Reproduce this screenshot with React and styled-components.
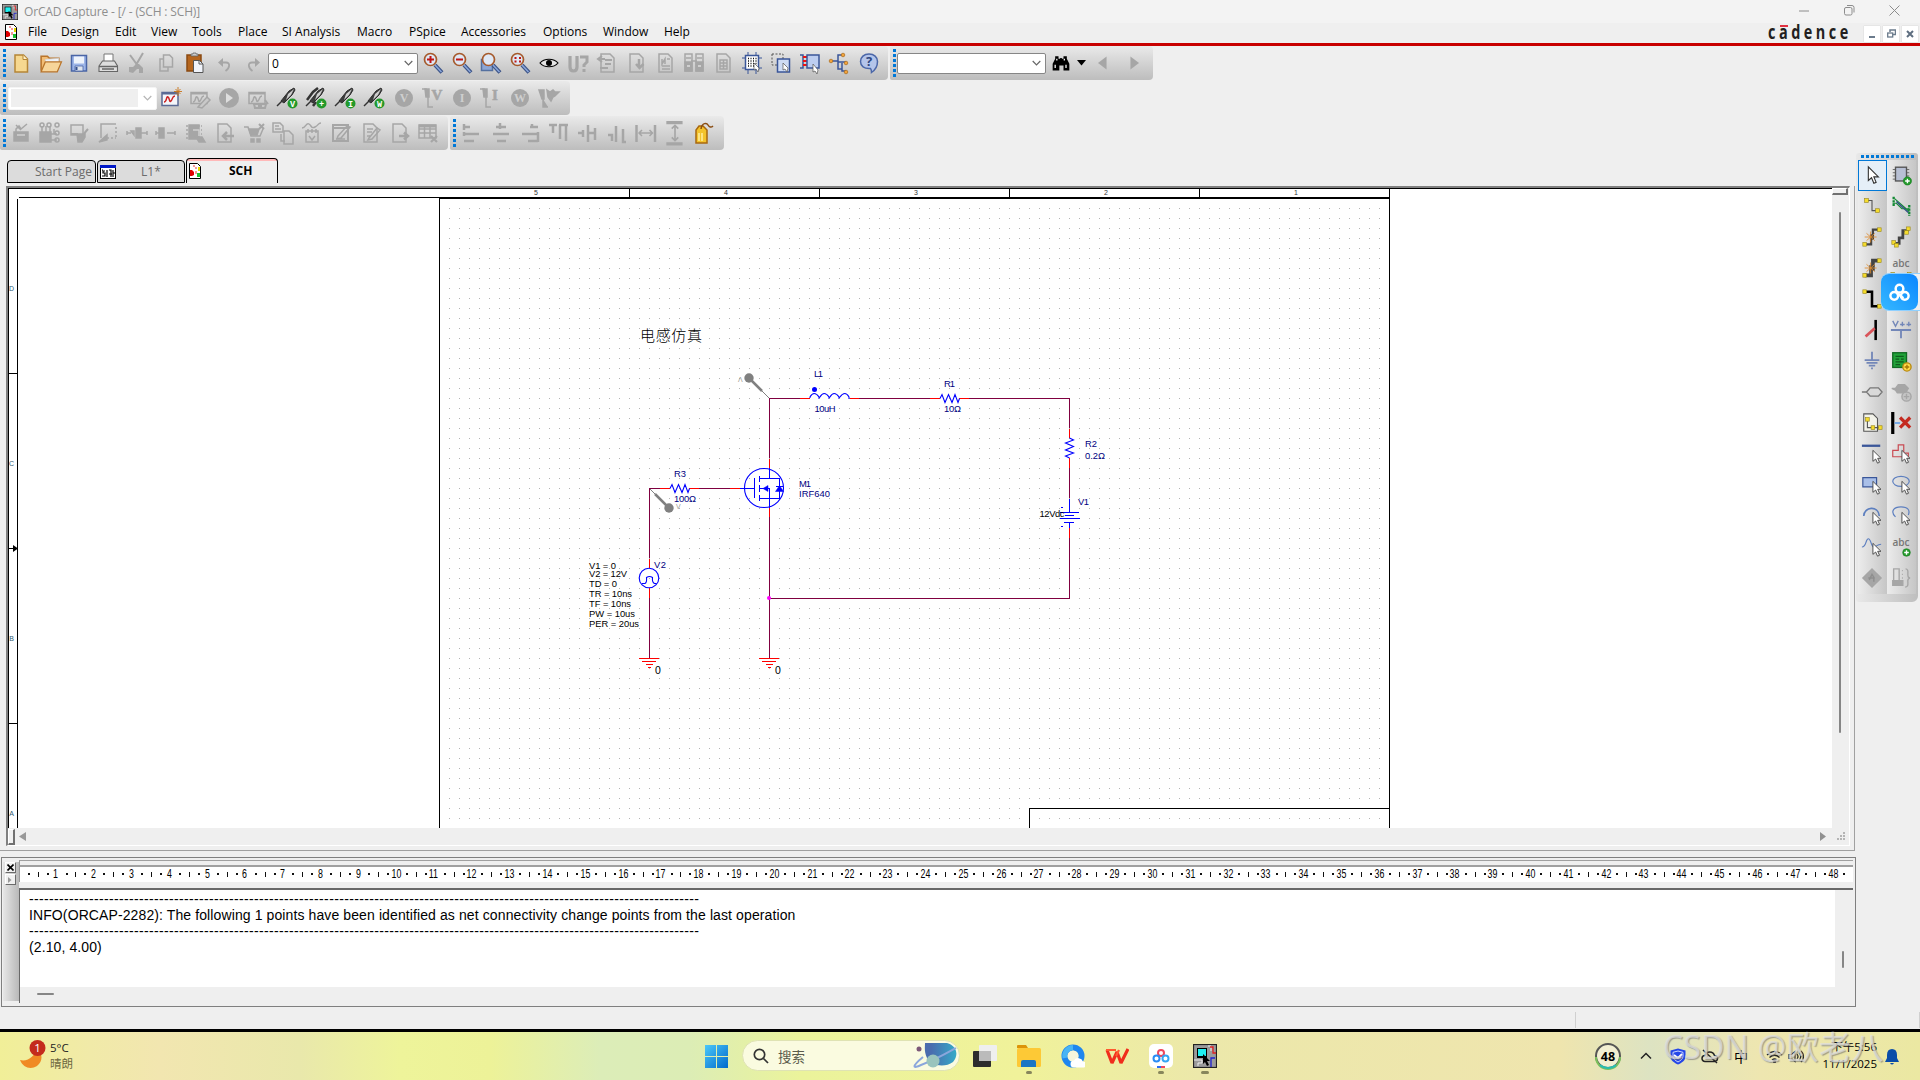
import React from "react";
import styled, { createGlobalStyle } from "styled-components";

const GlobalStyle = createGlobalStyle`
  * {
    box-sizing: border-box;
  }
  body {
    margin: 0;
    overflow: hidden;
    background: #efefef;
    font-family: "Open Sans", "Noto Sans CJK SC", sans-serif;
    font-size: 12px;
    color: #000;
  }
`;

/* ---------- window chrome ---------- */

const Screen = styled.div`
  position: relative;
  width: 1920px;
  height: 1080px;
  display: flex;
  flex-direction: column;
  overflow: hidden;
  background: #efefef;
`;

const TitleBar = styled.header`
  height: 23px;
  flex: none;
  display: flex;
  align-items: center;
  padding-left: 2px;
  background: #f3f3f3;
  color: #8e8e8e;
`;

const TitleText = styled.span`
  flex: 1;
  margin-left: 6px;
  letter-spacing: ${(props) => props.$spacing || "0"};
  white-space: nowrap;
`;

const WindowButtons = styled.div`
  display: flex;
  width: 139px;
  height: 20px;
  margin-bottom: 2px;
`;

const WindowButton = styled.div`
  width: 45.6px;
  display: flex;
  align-items: center;
  justify-content: center;
`;

const MenuBar = styled.nav`
  height: 20px;
  flex: none;
  display: flex;
  align-items: center;
  padding-left: 5px;
`;

const MenuIcon = styled.div`
  width: 23px;
  height: 18px;
`;

const MenuItem = styled.span`
  width: ${(props) => props.$width}px;
  line-height: 18px;
  padding-bottom: 2px;
  white-space: nowrap;
`;

const Brand = styled.div`
  position: relative;
  margin-left: auto;
  width: 87px;
  height: 19px;
  font-family: "Open Sans", sans-serif;
  font-weight: 700;
  font-size: 19px;
  line-height: 17px;
  letter-spacing: 4.6px;
  color: #231f20;
  white-space: nowrap;

  span {
    display: inline-block;
    transform: scaleX(0.76);
    transform-origin: left;
  }

  &:after {
    content: "";
    position: absolute;
    left: 12px;
    top: 1px;
    width: 8px;
    height: 2px;
    background: #e03040;
  }
`;

const MdiButtons = styled.div`
  display: flex;
  gap: 3px;
  margin: 1px 2px 0 9px;
`;

const MdiButton = styled.div`
  width: 16px;
  height: 16px;
  background: #fff;
  box-shadow: 0 0 1px #bbb;
  display: flex;
  align-items: center;
  justify-content: center;
`;

const RedLine = styled.div`
  height: 3px;
  flex: none;
  background: #c80000;
`;

/* ---------- toolbars ---------- */

const ToolbarArea = styled.div`
  height: 105px;
  flex: none;
  display: flex;
  flex-direction: column;
  gap: 1px;
`;

const ToolbarRow = styled.div`
  display: flex;
  gap: 2px;
`;

const Toolbar = styled.div`
  width: ${(props) => props.$width}px;
  height: 34px;
  display: flex;
  align-items: center;
  padding-left: 3px;
  background: linear-gradient(#eaeaea, #dcdcdc 30%, #bdbdbd);
  border-radius: 2px 4px 4px 2px;
`;

const Grip = styled.div`
  width: 3px;
  height: 28px;
  margin-right: ${(props) => props.$space}px;
  background: repeating-linear-gradient(#0078d7 0 3px, transparent 3px 5px);
`;

const Slot = styled.div`
  width: ${(props) => props.$width || 29.07}px;
  flex: none;
  height: 26px;
  display: flex;
  align-items: center;
  justify-content: center;

  svg {
    display: block;
  }
`;

const Combo = styled.div`
  width: ${(props) => props.$width}px;
  height: ${(props) => props.$height || 21}px;
  flex: none;
  display: flex;
  align-items: center;
  justify-content: space-between;
  padding: 0 4px 0 3px;
  background: #fff;
  border: 1px solid ${(props) => (props.$flat ? "#f4f4f4" : "#868686")};
  border-radius: 2px;
  font-size: 12px;
`;

const ComboFill = styled.div`
  width: 127px;
  height: 18px;
  margin-left: -1px;
  background: #efefef;
`;

/* ---------- document area ---------- */

const Middle = styled.div`
  height: 856px;
  flex: none;
  display: flex;
`;

const Documents = styled.main`
  width: 1856px;
  display: flex;
  flex-direction: column;
`;

const Tabs = styled.div`
  height: 35px;
  padding: 7px 0 0 7px;
  display: flex;
  align-items: flex-start;
  gap: 1px;
`;

const Tab = styled.div`
  width: ${(props) => props.$width}px;
  height: ${(props) => (props.$active ? 25 : 23)}px;
  margin-top: ${(props) => (props.$active ? 0 : 2)}px;
  display: flex;
  align-items: center;
  padding-left: 2px;
  border: 1px solid #000;
  border-bottom-width: ${(props) => (props.$active ? 0 : 1)}px;
  border-radius: 4px 4px 0 0;
  background: ${(props) => (props.$active ? "linear-gradient(#ffb9b9 2px, #efefef 2px)" : "#dcdcdc")};
  color: ${(props) => (props.$active ? "#000" : "#6b6b6b")};
  font-weight: ${(props) => (props.$active ? 700 : 400)};

  span {
    flex: 1;
    padding-left: ${(props) => props.$indent}px;
    line-height: 16px;
    white-space: nowrap;
  }
`;

const DocFrame = styled.section`
  width: 1855px;
  height: 665px;
  flex: none;
  border-right: 1px solid #a0a0a0;
  border-bottom: 1px solid #a0a0a0;
`;

const SchematicView = styled.div`
  width: 1844px;
  height: 660px;
  margin-left: 6px;
  display: grid;
  grid-template-columns: 1824px 17px;
  grid-template-rows: 640px 17px;
  border-left: 2px solid #808080;
  border-top: 2px solid #808080;
  border-right: 1px solid #fff;
  border-bottom: 1px solid #fff;
`;

const Sheet = styled.svg`
  display: block;
  width: 1824px;
  height: 640px;
  background: #fff;
  font-family: "Liberation Sans", "Noto Sans CJK SC", sans-serif;
`;

const VScroll = styled.div`
  display: flex;
  flex-direction: column;
  align-items: center;
  padding-right: 2px;
`;

const SplitBox = styled.div`
  width: ${(props) => props.$w}px;
  height: ${(props) => props.$h}px;
  flex: none;
  background: #f0f0f0;
  border: 1px solid #fff;
  border-right: 2px solid #707070;
  border-bottom: 2px solid #707070;
`;

const ScrollThumb = styled.div`
  width: ${(props) => props.$w}px;
  height: ${(props) => props.$h}px;
  margin: ${(props) => props.$margin || "0"};
  border-radius: 1px;
  background: #868686;
`;

const HScroll = styled.div`
  display: flex;
  align-items: center;
  padding-right: 6px;

  svg:last-child {
    margin-left: auto;
  }
`;

/* ---------- session log ---------- */

const LogPanel = styled.section`
  width: 1855px;
  height: 150px;
  margin: 6px 0 0 1px;
  display: flex;
  border: 1px solid #7f7f7f;
`;

const LogHandle = styled.div`
  width: 16px;
  height: 139px;
  margin: 4px 0 0 1px;
  flex: none;
  display: flex;
  flex-direction: column;
  align-items: center;
  gap: 1px;
  padding-right: 2px;
  background: linear-gradient(90deg, #e6e6e6, #b9b9b9);
`;

const HandleButton = styled.div`
  width: 11px;
  height: 11px;
  display: flex;
  align-items: center;
  justify-content: center;
  background: #f0f0f0;
  border: 1px solid #fff;
  border-right-color: #6a6a6a;
  border-bottom-color: #6a6a6a;
`;

const LogBody = styled.div`
  flex: 1;
  min-width: 0;
  margin-right: 2px;
  padding-top: 2px;
  display: flex;
  flex-direction: column;
`;

const Ruler = styled.div`
  height: 22px;
  flex: none;
  display: flex;
  overflow: hidden;
  padding-left: 4px;
  border-top: 1px solid #a0a0a0;
  border-left: 1px solid #9a9a9a;
  background: linear-gradient(#efefef 4px, #a0a0a0 4px 6px, #fff 6px);
`;

const RulerCell = styled.div`
  width: 37.82px;
  flex: none;
  display: flex;
  align-items: center;
  padding-top: 5px;
`;

const Mark = styled.i`
  flex: 1;
  display: flex;
  justify-content: center;

  &:before {
    content: "";
    width: ${(props) => (props.$tall ? 1 : 2)}px;
    height: ${(props) => (props.$tall ? 5 : 2)}px;
    background: #111;
  }
`;

const RulerNumber = styled.span`
  flex: 1;
  width: 0;
  display: flex;
  justify-content: center;
  font-family: "Liberation Sans", sans-serif;
  font-size: 13px;
  line-height: 14px;
  transform: translateX(-1.3px) scaleX(0.68);
`;

const LogText = styled.div`
  width: 1834px;
  height: 115px;
  margin-top: 6px;
  display: grid;
  grid-template-columns: 1815px 17px;
  grid-template-rows: 97px 16px;
  border-top: 2px solid #696969;
  border-left: 1px solid #696969;
`;

const LogLines = styled.div`
  padding: 1px 0 0 9px;
  background: #fff;
  font-family: "Liberation Sans", sans-serif;
  font-size: 14px;
  line-height: 16px;
`;

const LogLine = styled.div`
  height: 16px;
  white-space: nowrap;
  letter-spacing: ${(props) => (props.$rule ? 0.34 : 0.106)}px;
`;

/* ---------- side palette ---------- */

const Palette = styled.aside`
  width: 62px;
  height: 449px;
  margin-top: 2px;
  padding: 2px;
  display: flex;
  flex-direction: column;
  border-radius: 3px 3px 6px 3px;
  background: linear-gradient(90deg, #e9e9e9, #bebebe);
`;

const PaletteGrip = styled.div`
  width: 54px;
  height: 3px;
  margin: 0 0 2px 3px;
  background: repeating-linear-gradient(90deg, #0078d7 0 3px, transparent 3px 5px);
`;

const PaletteGrid = styled.div`
  display: grid;
  grid-template-columns: 29px 29px;
  grid-auto-rows: 31px;
`;

const PaletteCell = styled.div`
  display: flex;
  align-items: center;
  justify-content: center;
  padding: 0 1px 2px 0;
  background: linear-gradient(90deg, #ececec, #c6c6c6);
  ${(props) => props.$selected && "background: #e5eff8; outline: 1px solid #0078d7; outline-offset: -1px;"}

  svg {
    width: 22px;
    height: 22px;
  }
`;

const FloatingBadge = styled.div`
  position: absolute;
  left: 1881px;
  top: 273px;
  width: 39px;
  height: 38px;
  display: flex;
  border-top: 1px solid #8fd0ff;
  border-bottom: 1px solid #8fd0ff;
  border-radius: 8px 0 0 8px;
  background: #f0f0f0;

  div {
    width: 37px;
    display: flex;
    align-items: center;
    justify-content: center;
    border-radius: 8px;
    background: linear-gradient(45deg, #36b8ff, #0a86ff);
  }
`;

/* ---------- status bar + taskbar ---------- */

const StatusBar = styled.footer`
  height: 22px;
  flex: none;
  display: flex;
  justify-content: flex-end;
  padding: 5px 0 1px;

  div {
    width: 345px;
    border-left: 1px solid #d0d0d0;
    border-right: 1px solid #d0d0d0;
  }
`;

const Taskbar = styled.div`
  height: 51px;
  flex: none;
  display: flex;
  align-items: center;
  border-top: 3px solid #000;
  background: linear-gradient(
    90deg,
    #f1ef98 0,
    #f1eaa8 90px,
    #f2e6b0 160px,
    #e9e8ab 300px,
    #eef49a 400px,
    #edf298 490px,
    #dcedb8 600px,
    #dcedb5 690px,
    #ebf39b 800px,
    #f0f29a 1020px,
    #ece8aa 1200px,
    #efe5ae 1560px,
    #dde3c2 1650px,
    #eee6b0 1760px,
    #ebe8a2 1920px
  );
`;

const Weather = styled.div`
  width: 705px;
  display: flex;
  align-items: center;
  padding: 0 0 3px 18px;
`;

const WeatherText = styled.div`
  margin-left: 4px;
  padding-top: 2px;
  font-size: 11.5px;
  line-height: 16px;
  color: #222;

  span {
    display: block;
    color: #6b673f;
  }
`;

const SearchPill = styled.div`
  width: 218px;
  height: 31px;
  margin: 0 13px 1px 14px;
  display: flex;
  align-items: center;
  padding: 0 2px 0 10px;
  border-radius: 16px;
  border: 1px solid #dfe3b4;
  background: #fafbe0;
  font-size: 13.5px;
  color: #5b5b4c;

  span {
    flex: 1;
    margin-left: 9px;
  }
`;

const TaskIcon = styled.div`
  position: relative;
  width: 24px;
  height: 24px;
  margin-right: 20px;

  svg {
    display: block;
  }

  &:after {
    content: "";
    position: absolute;
    left: ${(props) => (props.$wide ? 8 : 9)}px;
    top: 27px;
    width: ${(props) => (props.$wide ? 8 : 6)}px;
    height: 3px;
    border-radius: 2px;
    background: ${(props) => (props.$running ? "#87865c" : "transparent")};
  }
`;

const Tray = styled.div`
  margin-left: auto;
  display: flex;
  align-items: center;
  padding-right: 20px;
`;

const TrayItem = styled.div`
  width: ${(props) => props.$width}px;
  display: flex;
  justify-content: center;
  font-size: 14px;
`;

const Clock = styled.div`
  width: 58px;
  margin: 0 7px 2px 15px;
  text-align: right;
  font-size: 11.5px;
  line-height: 17px;
  white-space: nowrap;
`;

const Watermark = styled.div`
  position: absolute;
  left: 1663px;
  top: 1025px;
  font-family: "Open Sans", "Noto Sans CJK SC", sans-serif;
  font-size: 32px;
  line-height: 44px;
  letter-spacing: 0.3px;
  white-space: nowrap;
  color: rgba(225, 225, 225, 0.72);
  text-shadow: 1px 1px 1px rgba(110, 110, 110, 0.6);
`;

/* ---------- icons ---------- */

const G = "#a6a6a6";

const Icon = ({ children, size = 24, stroke = G, w = 1.5 }) => (
  <svg width={size} height={size} viewBox="0 0 24 24" fill="none" stroke={stroke} strokeWidth={w}>
    {children}
  </svg>
);

const Arrow = ({ x = 10, y = 8 }) => (
  <path
    d={`M${x} ${y}v12l3-2.5 2 4.5 2.2-1-2-4.3h3.6z`}
    fill="#fff"
    stroke="#444"
    strokeWidth="1"
  />
);

const PlusDot = ({ x = 18, y = 18, r = 4.5 }) => (
  <g>
    <circle cx={x} cy={y} r={r} fill="#23992b" stroke="#157a1d" strokeWidth=".6" />
    <path d={`M${x - 2.5} ${y}h5M${x} ${y - 2.5}v5`} stroke="#fff" strokeWidth="1.5" />
  </g>
);

const Node = ({ x, y }) => <rect x={x - 2} y={y - 2} width="4" height="4" fill="#f5dc2c" stroke="#9b8a20" strokeWidth=".7" />;

const Chevron = ({ color = "#666" }) => (
  <svg width="9" height="6" viewBox="0 0 9 6" fill="none" stroke={color} strokeWidth="1.2">
    <path d="M.7 1l3.8 3.8L8.3 1" />
  </svg>
);

const Magnifier = ({ children, back }) => (
  <Icon>
    {back && <rect x="2.5" y="8.5" width="11" height="11" fill="#8ba6d6" stroke="#54709f" />}
    <path d="M14 14l7 7.5" stroke="#3c5488" strokeWidth="4" />
    <path d="M14 14l6.5 7" stroke="#8ba7da" strokeWidth="1.5" />
    <circle cx="9.5" cy="8.5" r="6" fill="#dfe8f5" stroke="#a65a2c" strokeWidth="1.7" />
    <g stroke="#c01515" strokeWidth="2">{children}</g>
  </Icon>
);

const Probe = ({ label, twin }) => (
  <Icon>
    <path d="M2 20l5-5" stroke="#333" strokeWidth="1.5" />
    <path d="M6 15l8-10 5-3 1 2-3 5-8 8z" fill="#3c3c3c" stroke="#2f2f2f" strokeWidth="1" />
    <path d="M13 8l6-5-3 6-5 5z" fill="#cfcfcf" stroke="none" />
    {twin && <path d="M3 14l6-8 5-4M9 20l3-4" stroke="#333" strokeWidth="2.5" />}
    <circle cx="17.5" cy="17.5" r="5" fill="#23992b" stroke="none" />
    <text x="17.5" y="20.5" fontSize="8.5" fontWeight="700" fill="#fff" stroke="none" textAnchor="middle" fontFamily="Liberation Mono, monospace">
      {label}
    </text>
  </Icon>
);

const GrayDisc = ({ label }) => (
  <Icon>
    <circle cx="12" cy="12" r="9" fill={G} stroke="none" />
    <text x="12" y="16.4" fontSize="12" fill="#cfcfcf" stroke="none" textAnchor="middle" fontFamily="Liberation Serif, serif" fontWeight="700">
      {label}
    </text>
  </Icon>
);

const GrayProbe = ({ label }) => (
  <Icon>
    <path d="M1 3h4v1M5.500 3v8M7 11v10h5" />
    <path d="M4 3h4v8h-3z" fill={G} />
    <text x="16" y="14" fontSize="15" fill={G} stroke={G} strokeWidth=".6" textAnchor="middle" fontFamily="Liberation Serif, serif" fontWeight="700">
      {label}
    </text>
  </Icon>
);

const NewIcon = () => (
  <Icon>
    <path d="M6 4h8.500l4 4v13h-12.500z" fill="#f6d890" stroke="#b58536" />
    <path d="M14 4v4.500h4.500" fill="#fff1c8" stroke="#b58536" strokeWidth="1" />
  </Icon>
);

const OpenIcon = () => (
  <Icon size={25}>
    <path d="M3 19V5h6l2 2h9v4" fill="#f2bd75" stroke="#b9742a" />
    <path d="M7 11V8l13-1v4" fill="#eef3fa" stroke="#ccc" strokeWidth=".7" />
    <path d="M3 20l4-9.500h15.500L18.500 20z" fill="#f7d59a" stroke="#b9742a" strokeWidth="1.2" />
  </Icon>
);

const SaveIcon = () => (
  <Icon>
    <path d="M4.500 4.500h15v15.500h-15z" fill="#9db5e8" stroke="#4a65a5" />
    <path d="M7 5.500h10v7h-10z" fill="#eef3fb" stroke="none" />
    <path d="M8 15h8v5h-8z" fill="#dfe5ee" stroke="#4a65a5" strokeWidth=".8" />
    <path d="M9.500 16v3" stroke="#35508f" strokeWidth="2" />
  </Icon>
);

const PrintIcon = () => (
  <Icon>
    <path d="M8 11V3h9v8" fill="#fff" stroke="#777" strokeWidth="1" />
    <path d="M3 15l3.500-5h12l3 5v5.500H3z" fill="#dedede" stroke="#666" strokeWidth="1.100" />
    <path d="M3 15.500h18.500M6 18h12" stroke="#666" strokeWidth="1.300" />
  </Icon>
);

const CutIcon = () => (
  <Icon>
    <path d="M5 4l8 11M18 2l-7 12" strokeWidth="2" />
    <path d="M4 21v-5h4l3-3h3l4 4v5h-4v-4h-2l-4 4z" fill={G} stroke="none" />
  </Icon>
);

const CopyIcon = () => (
  <Icon>
    <path d="M9.500 4h6l3 3v9h-9z" />
    <path d="M9 8H6v12h8v-4" />
  </Icon>
);

const PasteIcon = () => (
  <Icon>
    <rect x="4" y="4" width="14" height="16" fill="#b5651d" stroke="#8a4a12" />
    <path d="M8 5V3h2V2h3v1h2v2z" fill="#ccc" stroke="#666" strokeWidth=".8" />
    <path d="M10.500 9.500h6l3.500 3.500v8.500h-9.500z" fill="#f0f3fa" stroke="#555" strokeWidth="1" />
    <path d="M16 9.500V13h4" stroke="#555" strokeWidth="1" />
  </Icon>
);

const UndoIcon = ({ flip }) => (
  <Icon>
    <g transform={flip ? "translate(24 0) scale(-1 1)" : undefined}>
      <path d="M9 11.500h5c4.500 0 4 5.500-.5 8.500" strokeWidth="1.800" />
      <path d="M6 11.500l5-4.500v9z" fill={G} stroke="none" />
    </g>
  </Icon>
);

const EyeIcon = () => (
  <Icon stroke="#000" w={1.2}>
    <path d="M3 12c4-5 14-5 18 0-4 5-14 5-18 0z" fill="#e4e4e4" />
    <circle cx="12" cy="12" r="3" fill="#000" stroke="none" />
  </Icon>
);

const AnnotateIcon = () => (
  <Icon>
    <path d="M4 5v11q0 4 3.500 4t3.500-4V5" strokeWidth="3.200" />
    <path d="M14 6h7v5l-3 3v2M18 18v3" strokeWidth="3" />
  </Icon>
);

const PageIcon = ({ kind }) => (
  <Icon>
    <path d="M6 3h9l4 4v14H6z" />
    {kind === "back" && <path d="M10 9h7M10 13h6M3 8h7M7 5L3 8l4 3M5 17h8" strokeWidth="2" />}
    {kind === "drc" && <path d="M15 8v8M12 13l3.500 4 4-4" strokeWidth="2.500" />}
    {kind === "net" && <path d="M9 8v5l3-5v5M14 8h3M9 15h8M9 18h8" />}
    {kind === "table" && <path d="M9 9h7v9H9zM9 12h7M9 15h7M12.500 9v9" />}
    {kind === "out" && <path d="M12 15h9M17 11.500l4 3.500-4 3.500" strokeWidth="2.500" />}
    {kind === "in" && <path d="M11 15h11M15 11l-4 4 4 4" strokeWidth="2.500" />}
    {kind === "edit" && <path d="M9 8h6M9 11h5M9 15h3M11 17l8-10 3 2-8 9-4 1z" />}
  </Icon>
);

const CrossRefIcon = () => (
  <Icon>
    <path d="M3 3h7v17H3zM14 3h7v17h-7zM4 7h5M15 7h5M9 10h6" />
    <path d="M3 11h7v9H3zM14 11h7v9h-7z" fill={G} />
    <path d="M5 15h3M16 15h3" stroke="#ddd" />
  </Icon>
);

const GridIcon = () => (
  <Icon stroke="#3a5699">
    <rect x="5.500" y="4.500" width="13" height="14" fill="#fff" />
    <path d="M8 1v3M16 1v3M8 19v4M16 19v4M2 7h3M2 17h3M19 7h3M19 17h3" strokeWidth="1" />
    <path d="M8 7.500h9M8 10h9M8 12.500h9M8 15h6" stroke="#111" strokeDasharray="1 1.500" />
    <path d="M14 12v7l2-1 2 3 1-4z" fill="#fff" stroke="#555" strokeWidth=".7" />
  </Icon>
);

const SelectAreaIcon = () => (
  <Icon stroke="#3a5699">
    <rect x="3" y="3" width="11" height="11" stroke="#555" strokeDasharray="2 1.500" strokeWidth="1" />
    <rect x="8.500" y="8" width="12" height="13" fill="#cfdcf4" />
    <path d="M14 12v7l2-1 2 3 1-4z" fill="#fff" stroke="#555" strokeWidth=".7" />
  </Icon>
);

const PinSelectIcon = () => (
  <Icon stroke="#3a5699">
    <path d="M2 4h3v13H2" />
    <path d="M5 6h5M5 10h5M5 14h5" stroke="#e11" strokeWidth="2" />
    <rect x="9" y="4" width="12" height="13" fill="#bccdf0" />
    <path d="M15 13v8l2-1 2 3 1-4z" fill="#fff" stroke="#555" strokeWidth=".7" />
  </Icon>
);

const TreeIcon = () => (
  <Icon stroke="#3a5699">
    <path d="M4 10h7M15 4h-4v14h4M11 11h8M15 12v8h4" />
    <g fill="#f2a33a" stroke="#a8681a" strokeWidth=".7">
      <circle cx="4" cy="10" r="1.800" />
      <circle cx="16" cy="4" r="1.800" />
      <circle cx="19" cy="12" r="1.800" />
      <circle cx="19" cy="21" r="1.800" />
    </g>
  </Icon>
);

const HelpIcon = () => (
  <Icon stroke="#4b67a8">
    <path d="M12 3c5 0 8.500 3 8.500 7.500 0 6-3 9-6 11 0-2 0-3-1-4C7 18 3.500 15 3.500 10.500S7 3 12 3z" fill="#b4c5ea" />
    <text x="12" y="15" fontSize="13" fontWeight="700" fill="#2f477f" stroke="none" textAnchor="middle">
      ?
    </text>
  </Icon>
);

const BinocularsIcon = () => (
  <Icon stroke="none" size={20}>
    <path d="M5 4h4v3h2V6h2v1h2V4h4v3l3 6v8h-7v-6h-5v6H2v-8l3-6z" fill="#000" />
    <path d="M5 14v4M18 14v4M7 7v2M16 7v2" stroke="#fff" />
  </Icon>
);

const ProfileIcon = ({ kind }) => {
  const c = kind === "new" ? "#5a6a94" : G;
  return (
    <Icon stroke={c}>
      <rect x="3" y="6.500" width="16" height={kind === "new" ? 13 : 11} fill={kind === "new" ? "#f4f6fa" : "none"} />
      <path d="M3 7.500h16" strokeWidth="2" />
      <path d="M5 16c3 0 2-6 4-5s1 6 3 4 1-5 4-5" stroke={kind === "new" ? "#c22" : G} />
      {kind === "new" && <path d="M19 1v9M15 5.500h8M16.500 3l5 5M21.500 3l-5 5" stroke="#c8741a" strokeWidth=".9" />}
      {kind === "edit" && <path d="M10 21l9-10 3 3-8 8z" fill="#c9c9c9" />}
      {kind === "view" && <path d="M8 18h5v4H9zM15 18h5l-1 4h-4zM13 19h2M19 14l3 4" strokeWidth="2" />}
    </Icon>
  );
};

const RunIcon = () => (
  <Icon stroke="none">
    <circle cx="12" cy="12" r="10" fill={G} />
    <path d="M9 7l7 5-7 5z" fill="#dedede" />
  </Icon>
);

const MarkerIcon = () => (
  <Icon>
    <path d="M2 4h5v9H5zM6 13v8h5" fill={G} />
    <path d="M10 4l3 2 3-2 2 2h4l-4 4-2 1-2 4-3-4z" fill={G} />
  </Icon>
);

const BasketIcon = () => (
  <Icon>
    <path d="M5 11h14v9H5z" fill={G} />
    <path d="M7 11V8l3-3 2 3 6-5M7 4l5 5M6 14h12" />
    <path d="M8 14h8" stroke="#d0d0d0" />
  </Icon>
);

const MatrixIcon = () => (
  <Icon>
    <path d="M2 11h11v10H2z" fill={G} />
    <path d="M4 5v6M8 5v6M12 5v6M13 13h6M13 19h6M16 8v5" />
    <circle cx="4" cy="4" r="2" />
    <circle cx="11" cy="4" r="2" />
    <circle cx="19" cy="4" r="2" />
    <circle cx="19" cy="12" r="2" />
    <circle cx="19" cy="19" r="2" />
  </Icon>
);

const CheckPartIcon = () => (
  <Icon>
    <rect x="4" y="4" width="12" height="10" />
    <path d="M10 13h8v3l-3 5h-4z" fill={G} />
    <path d="M4 13h7M15 15l6-7" strokeWidth="2" />
  </Icon>
);

const CalloutIcon = () => (
  <Icon>
    <path d="M5 17V3h15" />
    <path d="M20 6v11M11 17h9" strokeDasharray="2 2" />
    <path d="M3 21l8-7v5z" fill={G} />
  </Icon>
);

const InlineIcon = ({ long }) => (
  <Icon>
    <path d="M2 10v4M2 12h4" />
    <path d={long ? "M6 10l3 4v-4zM16 12h6M22 10v4" : "M13 12h8M21 10v4"} />
    <rect x={long ? 11 : 5} y="7" width="5" height="10" fill={G} />
  </Icon>
);

const ChipIcon = () => (
  <Icon>
    <rect x="6" y="4" width="10" height="14" fill={G} />
    <path d="M3 5h16M3 9h16M3 13h16M3 17h16" strokeDasharray="2 1" />
    <path d="M10 9h6v6" stroke="#d0d0d0" />
    <path d="M13 16h6l3 5h-6z" fill={G} />
  </Icon>
);

const CartIcon = () => (
  <Icon>
    <path d="M2 6h4l3 9h9l3-7" />
    <path d="M7 8h10l-2 6H9z" fill={G} />
    <path d="M17 3l5 5M22 3l-5 5" strokeWidth="2" />
    <path d="M9 18h3v3H9zM15 18h3v3h-3z" fill={G} />
  </Icon>
);

const PagesIcon = () => (
  <Icon>
    <path d="M2 2h7l3 3v6H2zM4 5h4M4 8h6" />
    <path d="M10 13v7h4M13 10h5l4 4v9h-9z" />
  </Icon>
);

const WaveBagIcon = () => (
  <Icon>
    <path d="M2 7c4 0 4-6 7-4s2 5 6 3 3-4 6-4" />
    <path d="M6 10h12v11H6zM8 8v4M12 8v4M16 8v4" />
    <path d="M9 15l3 4 3-4" />
  </Icon>
);

const EditBoxIcon = () => (
  <Icon>
    <path d="M4 4h15v16H4zM4 7h15" strokeWidth="2" />
    <path d="M7 18h9M9 15l9-10 3 1-9 11-4 1z" />
  </Icon>
);

const TableIcon = () => (
  <Icon>
    <path d="M3 4h17v13H3zM3 8h17M3 12h17M8.500 4v13M14 4v13" />
    <path d="M3 5h17" strokeWidth="3" />
    <path d="M15 15l6 6M21 15l-6 6" strokeWidth="2.200" />
  </Icon>
);

const ALIGN_PATHS = {
  left: "M4 3v6M4 6h6M3 13h16M4 11v4M4 20h10",
  center: "M7 6h10M11 2v6M4 13h16M8 20h9",
  right: "M14 3v4M12 6h8M4 13h16M20 11v10M10 20h10",
  top: "M2 4h8M6 4v8M12 4h9M13 4v14M19 4v16",
  middle: "M2 12h5M7 9v7M12 4v17M12 12h6M19 7v12",
  bottom: "M3 14h4v6M11 5v16M18 8v13h3",
};

const AlignIcon = ({ kind }) => (
  <Icon w={2.5}>
    <path d={ALIGN_PATHS[kind]} />
  </Icon>
);

const SpreadHIcon = () => (
  <Icon>
    <path d="M2.500 4v17M21 4v17" strokeWidth="2.500" />
    <path d="M5 12h13M8 9l-3 3 3 3M15.500 9l3 3-3 3" />
  </Icon>
);

const SpreadVIcon = () => (
  <Icon size={26}>
    <path d="M4 2.500h15M4 22h15" strokeWidth="3" />
    <path d="M12 5v14M9 8l3-3 3 3M9 16l3 3 3-3" />
  </Icon>
);

const TagIcon = () => (
  <Icon>
    <path d="M4 22V9l3-4h4l4 4v13z" fill="#f3c32c" stroke="#a8680f" />
    <path d="M7 12v8M10 12v8" stroke="#fff0a0" />
    <path d="M9 8c1-7 6-6 7-4s3 3 5 1" stroke="#8a4c12" />
  </Icon>
);

/* palette icons */

const PointerIcon = () => (
  <Icon>
    <path d="M8 3v15l3.500-3 2.500 6 2.500-1-2.500-6h5z" fill="#fff" stroke="#333" strokeWidth="1.200" />
  </Icon>
);

const PartIcon = () => (
  <Icon>
    <path d="M3 6h18M3 9.500h18M3 13h18M3 16.500h18" stroke="#666" strokeWidth="1" />
    <rect x="6" y="3.500" width="12" height="15" fill="#b8c0d4" stroke="#555" />
    <PlusDot x={19} y={18.5} />
  </Icon>
);

const WireIcon = ({ heavy }) => (
  <Icon stroke={heavy ? "#000" : "#555"} w={heavy ? 2.8 : 1.2}>
    <path d={heavy ? "M4 4h8v16h8" : "M6 6h6v11h6"} />
    <Node x={heavy ? 4 : 6} y={heavy ? 4 : 6} />
    <Node x={heavy ? 20 : 18} y={heavy ? 20 : 17} />
  </Icon>
);

const AutoWireIcon = ({ heavy }) => (
  <Icon stroke="#444" w={heavy ? 4 : 2.5}>
    <path d="M4 20h7V9M13 15V4h7" />
    <path d="M4 12h13M10.500 6v12M6 8l9 8M15 8l-9 8" stroke="#e08a2c" strokeWidth=".9" />
    <Node x={20} y={4} />
    <Node x={4} y={20} />
  </Icon>
);

const BusWireIcon = () => (
  <Icon stroke="#444" w={3}>
    <path d="M6 19h4v-6h4V5h6" />
    <Node x={20} y={3} />
    <Node x={18} y={7} />
    <Node x={4} y={18} />
    <Node x={7} y={21} />
  </Icon>
);

const NetIcon = () => (
  <Icon stroke="#148a35">
    <path d="M5 4l16 14M3 9h4l6 6h8" strokeWidth="1.300" />
    <path d="M4 2v10M21 11v12" strokeWidth="2.500" strokeDasharray="2.500 1.200" />
    <path d="M7 7l13 12" stroke="#334f86" />
  </Icon>
);

const AliasIcon = ({ plus }) => (
  <Icon>
    <text x="12" y="11" fontSize="11" fill="#777" stroke="none" textAnchor="middle" fontWeight="600">
      abc
    </text>
    {plus ? <PlusDot x={18} y={18} r={4.2} /> : <path d="M4 19h16" stroke="#111" strokeWidth="2" />}
    {!plus && <Node x={3} y={19} />}
    {!plus && <Node x={21} y={19} />}
  </Icon>
);

const BusEntryIcon = () => (
  <Icon>
    <path d="M16 1v22" stroke="#000" strokeWidth="2.800" />
    <path d="M5 19l10-9" stroke="#d9545a" strokeWidth="3" />
  </Icon>
);

const PowerIcon = () => (
  <Icon stroke="#7387b8" w={2}>
    <path d="M1 12h22M12 13v8" />
    <path d="M3 2l3 6 3-6M11 6h5M18 6h5M13.500 3v5M20.500 3v5" strokeWidth="1.500" />
  </Icon>
);

const GroundIcon = () => (
  <Icon stroke="#7387b8" w={2}>
    <path d="M12 2v8M4 11h16M6 14h12M8.500 17h7M11 20h2" />
  </Icon>
);

const BoardIcon = () => (
  <Icon>
    <rect x="3" y="3" width="15" height="16" fill="#21a339" stroke="#116a22" />
    <path d="M6 7h9M6 10h4M12 10h3M6 13h9M6 16h5" stroke="#0f5c1d" strokeWidth="1.200" />
    <circle cx="18.500" cy="18.500" r="4.500" fill="#ffd94a" stroke="#b98a10" />
    <path d="M16 18.500h5M18.500 16v5" stroke="#a67606" />
  </Icon>
);

const PortIcon = () => (
  <Icon stroke="#777">
    <path d="M1 12h5l4-4.500h9l4 4.500-4 4.500h-9L6 12" fill="#d9d9d9" />
  </Icon>
);

const BlockPinIcon = () => (
  <Icon>
    <path d="M2 8h4l3-4h7l4 4-3 5H8l-2-3z" fill={G} />
    <circle cx="18" cy="17" r="5" fill="#c4c4c4" />
    <path d="M15 17h6M18 14v6" />
  </Icon>
);

const HierIcon = () => (
  <Icon stroke="#555" w={1.2}>
    <path d="M3 2h10l5 5v14H3z" fill="#f3f3ea" />
    <path d="M7 8v9h13" />
    <Node x={7} y={8} />
    <Node x={13} y={17} />
    <Node x={21} y={17} />
  </Icon>
);

const NoConnectIcon = () => (
  <Icon>
    <path d="M3 0v24" stroke="#000" strokeWidth="3.500" />
    <path d="M5 12h6" stroke="#6ea6e8" strokeWidth="2" />
    <path d="M11 6l11 11M22 6L11 17" stroke="#c42a20" strokeWidth="3.500" />
  </Icon>
);

const ShapeIcon = ({ d, color = "#5d7fbf", fill = "none", w = 1.3 }) => (
  <Icon stroke={color} w={w}>
    <path d={d} fill={fill} />
    <Arrow x={13} y={8} />
  </Icon>
);

const PictureIcon = () => (
  <Icon stroke="none">
    <path d="M12 1l11 11-11 11L1 12z" fill={G} />
    <path d="M9 14l3-6 2 3v5M8 12h7" stroke="#8e8e8e" />
  </Icon>
);

const BundleIcon = () => (
  <Icon>
    <path d="M4 2h6v13H4zM13 4h1M13 8h1M13 12h1M17 2q3 0 2.500 5t2.500 5q-3 0-2.500 5t-3 5" />
    <path d="M3 15h11v5H3z" fill={G} />
  </Icon>
);

const AppIcon = ({ size }) => (
  <svg width={size} height={size} viewBox="0 0 24 24">
    <rect x=".5" y=".5" width="23" height="23" fill="#9b9b9b" stroke="#222" strokeWidth="1.200" />
    <path d="M1 16h8v3H5v3M15 2h3v5" stroke="#eee" fill="none" />
    <path d="M17 3h3v6h3" stroke="#e02020" fill="none" strokeWidth="1.300" />
    <path d="M22 14h-4v9" stroke="#2020d0" fill="none" strokeWidth="1.300" />
    <rect x="4" y="4" width="10" height="10" fill="#000" />
    <rect x="5" y="5" width="8" height="7" fill="#1ff0f0" />
    <path d="M10 10v10l2-2 2 4 2-1-2-4h3z" fill="#000" />
  </svg>
);

const SchIcon = () => (
  <svg width="12" height="16" viewBox="0 0 12 16">
    <path d="M.5.500h8l3 3v12H.5z" fill="#fff" stroke="#000" />
    <path d="M1 7h2l2 2v3l-2 1H1z" fill="#e00000" />
    <path d="M4 3h2M6 5h2M7 8v3" stroke="#e33" strokeWidth="1" />
    <rect x="9" y="4" width="2" height="4" fill="#e6d600" />
    <rect x="8" y="10" width="3" height="4" fill="#18c030" />
  </svg>
);

const WaveformIcon = () => (
  <svg width="16" height="14" viewBox="0 0 16 14">
    <rect x=".5" y=".5" width="15" height="13" fill="#fff" stroke="#000" />
    <rect width="16" height="3" fill="#0018c8" />
    <path d="M2 5h1M5 6H3v2h2v3H2M7 5v7M9 5h2v7M9 9h3M13 5v7M13 8h2" stroke="#000" fill="none" strokeWidth="1.200" />
  </svg>
);

const CloudLoops = ({ size, color }) => (
  <svg width={size} height={size} viewBox="0 0 24 24" fill="none" stroke={color} strokeWidth="2.600">
    <circle cx="12" cy="8" r="4" />
    <circle cx="6.500" cy="15.500" r="4" />
    <circle cx="17.500" cy="15.500" r="4" />
    <path d="M9 12l7 6" />
  </svg>
);

/* ---------- toolbar data ---------- */

const FILE_ICONS = [
  <NewIcon />,
  <OpenIcon />,
  <SaveIcon />,
  <PrintIcon />,
  <CutIcon />,
  <CopyIcon />,
  <PasteIcon />,
  <UndoIcon />,
  <UndoIcon flip />,
];

const VIEW_ICONS = [
  <Magnifier><path d="M6 8.500h7M9.500 5v7" /></Magnifier>,
  <Magnifier><path d="M6 8.500h7" /></Magnifier>,
  <Magnifier back />,
  <Magnifier><path d="M6.500 7h2M11 7h2M6.500 10.500h2M11 10.500h2" /></Magnifier>,
  <EyeIcon />,
  <AnnotateIcon />,
  <PageIcon kind="back" />,
  <PageIcon kind="drc" />,
  <PageIcon kind="net" />,
  <CrossRefIcon />,
  <PageIcon kind="table" />,
  <GridIcon />,
  <SelectAreaIcon />,
  <PinSelectIcon />,
  <TreeIcon />,
  <HelpIcon />,
];

const PSPICE_ICONS = [
  <ProfileIcon kind="new" />,
  <ProfileIcon kind="edit" />,
  <RunIcon />,
  <ProfileIcon kind="view" />,
  <Probe label="V" />,
  <Probe label="+" twin />,
  <Probe label="I" />,
  <Probe label="W" />,
  <GrayDisc label="V" />,
  <GrayProbe label="V" />,
  <GrayDisc label="I" />,
  <GrayProbe label="I" />,
  <GrayDisc label="W" />,
  <MarkerIcon />,
];

const CIS_ICONS = [
  <BasketIcon />,
  <MatrixIcon />,
  <CheckPartIcon />,
  <CalloutIcon />,
  <InlineIcon long />,
  <InlineIcon />,
  <ChipIcon />,
  <PageIcon kind="in" />,
  <CartIcon />,
  <PagesIcon />,
  <WaveBagIcon />,
  <EditBoxIcon />,
  <PageIcon kind="edit" />,
  <PageIcon kind="out" />,
  <TableIcon />,
];

const ALIGN_ICONS = [
  <AlignIcon kind="left" />,
  <AlignIcon kind="center" />,
  <AlignIcon kind="right" />,
  <AlignIcon kind="top" />,
  <AlignIcon kind="middle" />,
  <AlignIcon kind="bottom" />,
  <SpreadHIcon />,
  <SpreadVIcon />,
  <TagIcon />,
];

const PALETTE_ICONS = [
  <PointerIcon />,
  <PartIcon />,
  <WireIcon />,
  <NetIcon />,
  <AutoWireIcon />,
  <BusWireIcon />,
  <AutoWireIcon heavy />,
  <AliasIcon />,
  <WireIcon heavy />,
  null,
  <BusEntryIcon />,
  <PowerIcon />,
  <GroundIcon />,
  <BoardIcon />,
  <PortIcon />,
  <BlockPinIcon />,
  <HierIcon />,
  <NoConnectIcon />,
  <ShapeIcon d="M1 3h20" color="#3a5699" w={2.5} />,
  <ShapeIcon d="M9 2h6v9h5v4H3V8h6z" color="#c94a52" />,
  <ShapeIcon d="M2 4h15v10H2z" fill="#a9bfe8" color="#3a5699" />,
  <ShapeIcon d="M3 8a9 5.500 0 1 1 18 0a9 5.500 0 1 1-18 0" />,
  <ShapeIcon d="M3 12c0-10 16-12 17 0" w={1.8} />,
  <ShapeIcon d="M6 13C0 7 4 2 12 2s10 4 8 9" />,
  <ShapeIcon d="M1 12c5 0 4-9 7-9s3 9 6 9 3-3 8-3" />,
  <AliasIcon plus />,
  <PictureIcon />,
  <BundleIcon />,
];

const MENU = [
  ["File", 33],
  ["Design", 54],
  ["Edit", 36],
  ["View", 41],
  ["Tools", 46],
  ["Place", 44],
  ["SI Analysis", 75],
  ["Macro", 52],
  ["PSpice", 52],
  ["Accessories", 82],
  ["Options", 60],
  ["Window", 61],
  ["Help", 30],
];

const Slots = ({ icons }) => icons.map((icon, i) => <Slot key={i}>{icon}</Slot>);

/* ---------- schematic ---------- */

const WIRE = "#800040";
const PIN = "#ff0000";
const PART = "#0000ff";

// every entry: colour, then path in sheet coordinates
const LINES = [
  [WIRE, "M769.5 458V398.5H800M859 398.500H930M969 398.500H1069.500V428M1069.500 468V498"],
  [WIRE, "M1069.500 538V598.500H769.500M769.500 517V658M649.500 598V658M649.500 558V488.500H660M699 488.500H730"],
  [PIN, "M800 398.500H810M850 398.500H859M930 398.500H940M959 398.500H969M1069.500 429V438M1069.500 458V468"],
  [PIN, "M1069.500 528V538M769.500 459V468M769.500 508V517M649.500 559V568M649.500 588V598"],
  [PIN, "M660 488.500H670M689 488.500H699M730 488.500H740"],
  [PIN, "M639 658.500h20M642 661.500h14M646 664.500h7M648 667.500h3"],
  [PIN, "M759 658.500h20M762 661.500h14M766 664.500h7M768 667.500h3"],
  [PART, "M1069.500 499V512M1060 512.500h19M1065 515.500h9M1060 518.500h20M1064 522.500h10M1069.500 522V528"],
  [PART, "M1061 507.500h2M1061 526.500h2"],
  [PART, "M740 488.500H754.500M754.500 478V498M759.500 476V482M759.500 485V492M759.500 495V501"],
  [PART, "M760 478.500H779.500V498.500H760M769.500 468V478M769.500 508V488.500H760M776 486.500h7"],
];

const LABELS = [
  ["L1", 814, 377, 9],
  ["10uH", 814.5, 412, 21],
  ["R1", 944, 387, 11],
  ["10Ω", 944, 412, 17],
  ["R2", 1085, 447, 12],
  ["0.2Ω", 1085, 459, 20],
  ["V1", 1078, 505, 11],
  ["M1", 799, 487, 12],
  ["IRF640", 799, 497, 31],
  ["R3", 674, 477, 12],
  ["100Ω", 674, 502, 22],
  ["V2", 654, 568, 12],
];

const PARAMS = [
  ["V1 = 0", 589, 569, 27],
  ["V2 = 12V", 589, 577, 38],
  ["TD = 0", 589, 587, 28],
  ["TR = 10ns", 589, 597, 43],
  ["TF = 10ns", 589, 607, 42],
  ["PW = 10us", 589, 617, 46],
  ["PER = 20us", 589, 627, 50],
  ["12Vdc", 1039.5, 517, 25],
];

const Schematic = () => (
  <Sheet viewBox="8 188 1824 640">
    <defs>
      <pattern id="dots" x="439" y="198" width="10" height="10" patternUnits="userSpaceOnUse">
        <rect width="1" height="1" fill="#b4b4b4" />
      </pattern>
    </defs>
    <rect x="448" y="207" width="935" height="621" fill="url(#dots)" />

    <g fill="none" stroke="#000" shapeRendering="crispEdges">
      <path d="M8 188.500H1832M8.500 188V828M19 197.500H1390M17.500 199V828" />
      <path d="M439 198H1390" strokeWidth="2" />
      <path d="M439.500 198V828M1389.500 188V828M1029.500 828V808.500H1389" />
      <path d="M629.500 189v8M819.500 189v8M1009.500 189v8M1199.500 189v8" />
      <path d="M9 373.500h8M9 548.500h8M9 723.500h8" />
    </g>
    <path d="M13 545l5 3.500-5 3.500z" />

    <g fontSize="7" fill="#333" textAnchor="middle">
      {[5, 4, 3, 2, 1].map((n, i) => (
        <text key={n} x={536 + i * 190} y="195">
          {n}
        </text>
      ))}
      {["D", "C", "B", "A"].map((n, i) => (
        <text key={n} x="11.500" y={290.5 + i * 175} fill="#2f5a70">
          {n}
        </text>
      ))}
    </g>

    <g fill="none" shapeRendering="crispEdges">
      {LINES.map(([color, d], i) => (
        <path key={i} d={d} stroke={color} />
      ))}
    </g>

    <g fill="none" stroke={PART} strokeWidth="1.100">
      <path d="M810 398v-1q4-7 9 0v1q1-1 1-1 4-7 9 0v1q1-1 1-1 4-7 9 0v1q1-1 1-1 5-7 9 0v2" />
      <path d="M940 398.500l2-4 3 8 3.500-8 3.500 8 3-8 3 8 1.500-4" />
      <path d="M670 488.500l2-4 3 8 3.500-8 3.500 8 3-8 3 8 1.500-4" />
      <path d="M1069.500 438l4 2-8 3 8 3.500-8 3.500 8 3-8 3 4 2" />
      <circle cx="764" cy="488" r="19.500" />
      <circle cx="649" cy="578" r="9.800" />
      <path d="M642 583.500h3q2-1 1.500-6 3-2 6 0-.5 5 2 6h2" />
    </g>
    <circle cx="814.500" cy="389.500" r="2.500" fill={PART} />
    <path d="M763 488.500l5-3v6zM779.500 485.500l-4 6h8z" fill={PART} stroke={PART} strokeWidth=".5" />
    <circle cx="769" cy="598" r="2" fill="#ff00ff" />

    <g stroke="#808080" fill="#808080">
      <circle cx="749" cy="378" r="4.700" stroke="none" />
      <path d="M750 379l12 12" strokeWidth="2.500" />
      <path d="M760 389l9 9" strokeWidth="1" />
      <circle cx="669" cy="508" r="4.700" stroke="none" />
      <path d="M668 507l-13-13" strokeWidth="2.500" />
      <path d="M657 496l-7-7" strokeWidth="1" />
    </g>
    <g fontSize="7" fill="#a09a92">
      <text x="738" y="382">Λ</text>
      <text x="676" y="509">V</text>
    </g>

    <g fontSize="9.400" fill="#000080">
      {LABELS.map(([text, x, y, len]) => (
        <text key={text} x={x} y={y} textLength={len}>
          {text}
        </text>
      ))}
    </g>
    <g fontSize="9.400">
      {PARAMS.map(([text, x, y, len]) => (
        <text key={text} x={x} y={y} textLength={len}>
          {text}
        </text>
      ))}
    </g>
    <g fontSize="10.500">
      <text x="655" y="674">0</text>
      <text x="775" y="674">0</text>
    </g>
    <text x="640" y="341" fontSize="15" fontWeight="300" textLength="62">
      电感仿真
    </text>
  </Sheet>
);

const Triangle = ({ dir, color = "#909090", w = 7, h = 9 }) => (
  <svg width={w} height={h} viewBox="0 0 7 9">
    <path d={dir === "left" ? "M6 0v9L0 4.500z" : "M1 0v9l6-4.500z"} fill={color} />
  </svg>
);

const App = () => (
  <Screen>
    <GlobalStyle />
    <TitleBar>
      <AppIcon size={16} />
      <TitleText $spacing="-0.15px">OrCAD Capture - [/ - (SCH : SCH)]</TitleText>
      <WindowButtons>
        <WindowButton>
          <svg width="10" height="2"><path d="M0 1h10" stroke="#8c8c8c" /></svg>
        </WindowButton>
        <WindowButton>
          <svg width="11" height="11" fill="none" stroke="#8c8c8c">
            <rect x=".5" y="2.500" width="7.500" height="7.500" rx="1.500" />
            <path d="M3 .5h5q2 0 2 2v5" />
          </svg>
        </WindowButton>
        <WindowButton>
          <svg width="11" height="11"><path d="M.5.500l10 10M10.500.5l-10 10" stroke="#8c8c8c" /></svg>
        </WindowButton>
      </WindowButtons>
    </TitleBar>

    <MenuBar>
      <MenuIcon><SchIcon /></MenuIcon>
      {MENU.map(([label, width]) => (
        <MenuItem key={label} $width={width}>
          {label}
        </MenuItem>
      ))}
      <Brand><span>cadence</span></Brand>
      <MdiButtons>
        <MdiButton>
          <svg width="8" height="8"><path d="M1 7h6" stroke="#6b7b8c" strokeWidth="2" /></svg>
        </MdiButton>
        <MdiButton>
          <svg width="9" height="9" fill="none" stroke="#6b7b8c">
            <path d="M3 3V1h5.500v4.500H6" strokeWidth="1.500" />
            <rect x=".7" y="4" width="5" height="4" strokeWidth="1.300" />
          </svg>
        </MdiButton>
        <MdiButton>
          <svg width="8" height="8"><path d="M1 1l6 6M7 1L1 7" stroke="#5e6e80" strokeWidth="2" /></svg>
        </MdiButton>
      </MdiButtons>
    </MenuBar>
    <RedLine />

    <ToolbarArea>
      <ToolbarRow>
        <Toolbar $width={888}>
          <Grip $space={0.5} />
          <Slots icons={FILE_ICONS} />
          <Combo $width={150}>
            0
            <Chevron />
          </Combo>
          <Slots icons={VIEW_ICONS} />
        </Toolbar>
        <Toolbar $width={263}>
          <Grip $space={1} />
          <Combo $width={149}>
            <span />
            <Chevron />
          </Combo>
          <Slot $width={30}><BinocularsIcon /></Slot>
          <Slot $width={11}>
            <svg width="9" height="6"><path d="M0 0h9L4.500 5.500z" /></svg>
          </Slot>
          <Slot $width={32}><Triangle dir="left" color="#a6a6a6" w={10} h={14} /></Slot>
          <Slot $width={29}><Triangle dir="right" color="#a6a6a6" w={10} h={14} /></Slot>
        </Toolbar>
      </ToolbarRow>
      <ToolbarRow>
        <Toolbar $width={570}>
          <Grip $space={2} />
          <Combo $width={148.5} $height={23} $flat>
            <ComboFill />
            <Chevron color="#b5b5b5" />
          </Combo>
          <Slots icons={PSPICE_ICONS} />
        </Toolbar>
      </ToolbarRow>
      <ToolbarRow>
        <Toolbar $width={448}>
          <Grip $space={0.5} />
          <Slots icons={CIS_ICONS} />
        </Toolbar>
        <Toolbar $width={274}>
          <Grip $space={1} />
          <Slots icons={ALIGN_ICONS} />
        </Toolbar>
      </ToolbarRow>
    </ToolbarArea>

    <Middle>
      <Documents>
        <Tabs>
          <Tab $width={89} $indent={25}>
            <span>Start Page</span>
          </Tab>
          <Tab $width={88} $indent={25}>
            <WaveformIcon />
            <span>L1*</span>
          </Tab>
          <Tab $width={92} $indent={28} $active>
            <SchIcon />
            <span>SCH</span>
          </Tab>
        </Tabs>

        <DocFrame>
          <SchematicView>
            <Schematic />
            <VScroll>
              <SplitBox $w={16} $h={7} />
              <ScrollThumb $w={2} $h={521} $margin="17px 0 0 0" />
            </VScroll>
            <HScroll>
              <SplitBox $w={7} $h={16} />
              <svg width="20" height="9" viewBox="-5 0 20 9"><path d="M6 0v9L-1 4.500z" fill="#989898" /></svg>
              <Triangle dir="right" />
            </HScroll>
            <svg width="17" height="17" fill="#b4b4b4">
              <path d="M11 4h2v2h-2zM8 7h2v2H8zM11 7h2v2h-2zM5 10h2v2H5zM8 10h2v2H8zM11 10h2v2h-2z" />
            </svg>
          </SchematicView>
        </DocFrame>

        <LogPanel>
          <LogHandle>
            <HandleButton>
              <svg width="7" height="7"><path d="M.5.500l6 6M6.500.5l-6 6" stroke="#000" strokeWidth="1.600" /></svg>
            </HandleButton>
            <HandleButton>
              <svg width="4" height="6"><path d="M0 0l3.500 3L0 6z" fill="#999" /></svg>
            </HandleButton>
          </LogHandle>
          <LogBody>
            <Ruler>
              {Array.from({ length: 48 }, (_, i) => (
                <RulerCell key={i}>
                  <Mark />
                  <Mark $tall />
                  <Mark />
                  <RulerNumber>{i + 1}</RulerNumber>
                </RulerCell>
              ))}
              <RulerCell>
                <Mark />
                <Mark $tall />
                <Mark />
                <RulerNumber />
              </RulerCell>
            </Ruler>
            <LogText>
              <LogLines>
                <LogLine $rule>{"-".repeat(134)}</LogLine>
                <LogLine>
                  INFO(ORCAP-2282): The following 1 points have been identified as net connectivity change points from
                  the last operation
                </LogLine>
                <LogLine $rule>{"-".repeat(134)}</LogLine>
                <LogLine>(2.10, 4.00)</LogLine>
              </LogLines>
              <VScroll>
                <ScrollThumb $w={2} $h={17} $margin="61px 0 0 0" />
              </VScroll>
              <HScroll>
                <ScrollThumb $w={17} $h={2} $margin="0 0 2px 17px" />
              </HScroll>
            </LogText>
          </LogBody>
        </LogPanel>
      </Documents>

      <Palette>
        <PaletteGrip />
        <PaletteGrid>
          {PALETTE_ICONS.map((icon, i) => (
            <PaletteCell key={i} $selected={i === 0}>
              {icon}
            </PaletteCell>
          ))}
        </PaletteGrid>
      </Palette>
    </Middle>

    <StatusBar>
      <div />
    </StatusBar>

    <Taskbar>
      <Weather>
        <svg width="28" height="30" viewBox="0 0 28 30">
          <path d="M2 20c8 2 15-4 17-12 6 6 6 13 0 18-6 4-14 2-17-6z" fill="#f08a24" />
          <circle cx="19.500" cy="8" r="8" fill="#c42b1c" />
          <text x="19.500" y="12" fontSize="11.500" fill="#fff" textAnchor="middle">1</text>
        </svg>
        <WeatherText>
          5°C
          <span>晴朗</span>
        </WeatherText>
      </Weather>
      <svg width="23" height="23">
        <defs>
          <linearGradient id="win" x2="1" y2="1">
            <stop offset="0" stopColor="#4cc8f8" />
            <stop offset="1" stopColor="#0069cc" />
          </linearGradient>
        </defs>
        <path d="M0 0h11v11H0zM12 0h11v11H12zM0 12h11v11H0zM12 12h11v11H12z" fill="url(#win)" />
      </svg>
      <SearchPill>
        <svg width="16" height="16" fill="none" stroke="#333" strokeWidth="1.700">
          <circle cx="6.500" cy="6.500" r="5.200" />
          <path d="M10.500 10.500l4.500 4.500" />
        </svg>
        <span>搜索</span>
        <svg width="44" height="25" viewBox="0 0 44 25">
          <defs>
            <linearGradient id="planet">
              <stop offset="0.200" stopColor="#4a6cae" />
              <stop offset="1" stopColor="#36a9c8" />
            </linearGradient>
          </defs>
          <path d="M12 0h22c10 3 12 12 6 19-8 6-22 4-26-4-3-6-2-11-2-15z" fill="url(#planet)" />
          <path d="M10 14C-2 24 0 26 8 22 22 17 34 10 43 5" fill="none" stroke="#8ba6dc" strokeWidth="2" />
          <circle cx="20" cy="18" r="6.500" fill="#9ac4bd" />
          <circle cx="6" cy="6" r="2.500" fill="#7c5878" />
        </svg>
      </SearchPill>
      <TaskIcon>
        <svg width="24" height="24">
          <rect x="6" y="1" width="18" height="16" rx="1" fill="#efefef" />
          <rect y="7" width="18" height="16" rx="1" fill="#2d2d2d" />
          <rect x="6" y="7" width="12" height="10" fill="#bbb" />
        </svg>
      </TaskIcon>
      <TaskIcon $running>
        <svg width="24" height="24">
          <path d="M0 2q0-1 1-1h8l2 3h-11z" fill="#dc9408" />
          <rect y="4" width="24" height="19" rx="1.500" fill="#fdc936" />
          <path d="M4 23v-5q0-2 2-2h11q2 0 2 2v5z" fill="#1b75c4" />
        </svg>
      </TaskIcon>
      <TaskIcon>
        <svg width="24" height="24" fill="none">
          <circle cx="12" cy="12" r="8.500" stroke="#1f86ee" strokeWidth="6" />
          <circle cx="12" cy="12" r="5.500" fill="#f6f6dc" />
          <path d="M4 14a8.500 8.500 0 0 1 8-10.500" stroke="#48b4f4" strokeWidth="5" />
          <path d="M13 23.500a3.500 3.500 0 0 1 0-7 5 5 0 0 1 9 1 3 3 0 0 1 0 6z" fill="#fff" />
        </svg>
      </TaskIcon>
      <TaskIcon>
        <svg width="24" height="24" fill="none">
          <path d="M2 6l5 13 5-11 4 11 7-14" stroke="#f02d1c" strokeWidth="3.200" strokeLinejoin="bevel" />
          <path d="M1 6h10M14 6l-3 6" stroke="#ff5a30" strokeWidth="2.200" />
        </svg>
      </TaskIcon>
      <TaskIcon $running>
        <svg width="24" height="24" fill="none">
          <rect width="24" height="24" rx="5" fill="#fff" />
          <circle cx="12" cy="9" r="3" stroke="#f0475c" strokeWidth="2" />
          <circle cx="7.500" cy="14.500" r="3" stroke="#2a8cf4" strokeWidth="2" />
          <circle cx="16.500" cy="14.500" r="3" stroke="#35a6f4" strokeWidth="2" />
          <path d="M8 23h4" stroke="#2a6cf4" strokeWidth="2" />
          <path d="M12 23h4" stroke="#f0475c" strokeWidth="2" />
        </svg>
      </TaskIcon>
      <TaskIcon $running $wide>
        <AppIcon size={24} />
      </TaskIcon>

      <Tray>
        <TrayItem $width={52}>
          <svg width="28" height="28" viewBox="0 0 28 28">
            <circle cx="14" cy="14" r="12" fill="#f2efd2" stroke="#555" strokeWidth="2" />
            <path d="M2 15a12 12 0 0 0 24 0" fill="none" stroke="#7cc05c" strokeWidth="2" />
            <path d="M6 23a12 12 0 0 0 16 0" fill="none" stroke="#2cbcae" strokeWidth="2" />
            <text x="14" y="18.500" fontSize="12.500" fontWeight="700" textAnchor="middle">48</text>
          </svg>
        </TrayItem>
        <TrayItem $width={24}>
          <svg width="12" height="8" fill="none" stroke="#222" strokeWidth="1.500"><path d="M1 6.500l5-5 5 5" /></svg>
        </TrayItem>
        <TrayItem $width={40}>
          <svg width="16" height="17" viewBox="0 0 16 17">
            <path d="M8 .5l7.500 2v6c0 4-4 6.500-7.500 8-3.500-1.500-7.500-4-7.500-8v-6z" fill="#2446e8" />
            <path d="M8 3l5 1.300v4C13 11 10.500 12.500 8 14 5.500 12.500 3 11 3 8.300v-4z" fill="none" stroke="#dfe6ff" strokeWidth=".9" />
            <path d="M4 7l4 3 4-4" fill="none" stroke="#fff" strokeWidth="1.800" />
          </svg>
        </TrayItem>
        <TrayItem $width={24}>
          <svg width="18" height="15" fill="none" stroke="#222" strokeWidth="1.500">
            <path d="M4 12.500a3 3 0 0 1 0-6 5 5 0 0 1 9.500 0 3 3 0 0 1 0 6zM2 1l14 13" />
          </svg>
        </TrayItem>
        <TrayItem $width={38}>中</TrayItem>
        <TrayItem $width={28}>
          <svg width="17" height="13" fill="none" stroke="#222" strokeWidth="1.300">
            <path d="M1 5q7.500-7 15 0M3.500 7.500q5-4.500 10 0M6 10q2.500-2 5 0" />
            <circle cx="8.500" cy="11.500" r="1" fill="#222" />
          </svg>
        </TrayItem>
        <TrayItem $width={16}>
          <svg width="16" height="13" fill="none" stroke="#222" strokeWidth="1.200">
            <path d="M1 4.500h2.500L7 1.500v10L3.500 8.500H1zM9 4q2 2.500 0 5M11 2.500q3.500 4 0 8M13 1q5 5.500 0 11" />
          </svg>
        </TrayItem>
        <Clock>
          下午5:56
          <br />
          11/1/2025
        </Clock>
        <svg width="16" height="17" viewBox="0 0 16 17">
          <path d="M8 1q5 0 5 6v3l2 4H1l2-4V7q0-6 5-6zM6 15h4q-2 3-4 0z" fill="#0b4da8" />
        </svg>
      </Tray>
    </Taskbar>

    <FloatingBadge>
      <div>
        <CloudLoops size={23} color="#fff" />
      </div>
    </FloatingBadge>
    <Watermark>CSDN @欧老八</Watermark>
  </Screen>
);

export default App;
